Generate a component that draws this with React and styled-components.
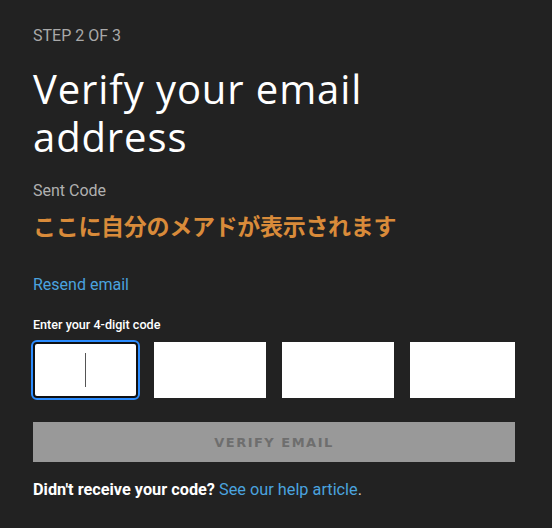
import React from "react";
import styled, { createGlobalStyle } from "styled-components";

const GlobalStyle = createGlobalStyle`
  html, body {
    margin: 0;
    padding: 0;
    background: #222222;
  }
  body {
    font-family: Roboto, "Liberation Sans", sans-serif;
  }
`;

const Page = styled.div`
  width: 552px;
  height: 528px;
  box-sizing: border-box;
  padding: 27px 37px 0 33px;
  background: #222222;
  color: #ffffff;
`;

const Step = styled.div`
  font-size: 16px;
  line-height: 18px;
  color: #a9a9a9;
`;

const Heading = styled.h1`
  margin: 20px 0 0;
  font-family: "Open Sans", sans-serif;
  font-weight: 400;
  font-size: 40px;
  line-height: 48px;
  letter-spacing: 0.9px;
  color: #ffffff;
`;

const SentLabel = styled.div`
  margin-top: 20px;
  font-size: 16px;
  line-height: 19px;
  color: #b0b0b0;
`;

const Email = styled.div`
  margin-top: 10px;
  font-family: "Noto Sans CJK JP", sans-serif;
  font-weight: 700;
  font-size: 23px;
  line-height: 30px;
  letter-spacing: -0.3px;
  color: #d98b3a;
`;

const Link = styled.a`
  color: #4aa3df;
  text-decoration: none;
  cursor: pointer;
`;

const Resend = styled(Link)`
  display: block;
  margin-top: 35px;
  font-size: 16px;
  line-height: 19px;
`;

const CodeLabel = styled.div`
  margin-top: 24px;
  font-size: 12.6px;
  font-weight: 500;
  line-height: 14px;
  color: #ffffff;
`;

const CodeRow = styled.div`
  display: flex;
  gap: 16px;
  margin-top: 10px;
  height: 56px;
`;

const CodeBox = styled.div`
  flex: 0 0 ${(p) => p.$w}px;
  box-sizing: border-box;
  height: 56px;
  background: #ffffff;
  display: flex;
  align-items: center;
  justify-content: center;
  border: ${(p) => (p.$focused ? "2px solid #111111" : "none")};
  border-radius: ${(p) => (p.$focused ? "4px" : "0")};
  outline: ${(p) => (p.$focused ? "2px solid #2b8cff" : "none")};
`;

const Caret = styled.span`
  width: 1px;
  height: 34px;
  background: #555555;
`;

const VerifyButton = styled.button`
  display: block;
  width: 482px;
  height: 40px;
  margin-top: 24px;
  border: none;
  background: #999999;
  color: #6e6e6e;
  font-family: "DejaVu Sans", sans-serif;
  font-weight: 700;
  font-size: 13px;
  letter-spacing: 1.5px;
  text-transform: uppercase;
`;

const Footer = styled.p`
  margin: 18px 0 0;
  font-size: 16.3px;
  line-height: 19px;
  color: #ffffff;
`;

const Strong = styled.strong`
  font-weight: 700;
`;

const Dot = styled.span`
  color: #c8c8c8;
`;

const widths = [105, 112, 112, 105];

export default function App() {
  return (
    <>
      <GlobalStyle />
      <Page>
        <Step>STEP 2 OF 3</Step>
        <Heading>
          Verify your email
          <br />
          address
        </Heading>
        <SentLabel>Sent Code</SentLabel>
        <Email>ここに自分のメアドが表示されます</Email>
        <Resend>Resend email</Resend>
        <CodeLabel>Enter your 4-digit code</CodeLabel>
        <CodeRow>
          {widths.map((w, i) => (
            <CodeBox key={i} $w={w} $focused={i === 0}>
              {i === 0 && <Caret />}
            </CodeBox>
          ))}
        </CodeRow>
        <VerifyButton disabled>Verify Email</VerifyButton>
        <Footer>
          <Strong>Didn't receive your code?</Strong> <Link>See our help article</Link>
          <Dot>.</Dot>
        </Footer>
      </Page>
    </>
  );
}
